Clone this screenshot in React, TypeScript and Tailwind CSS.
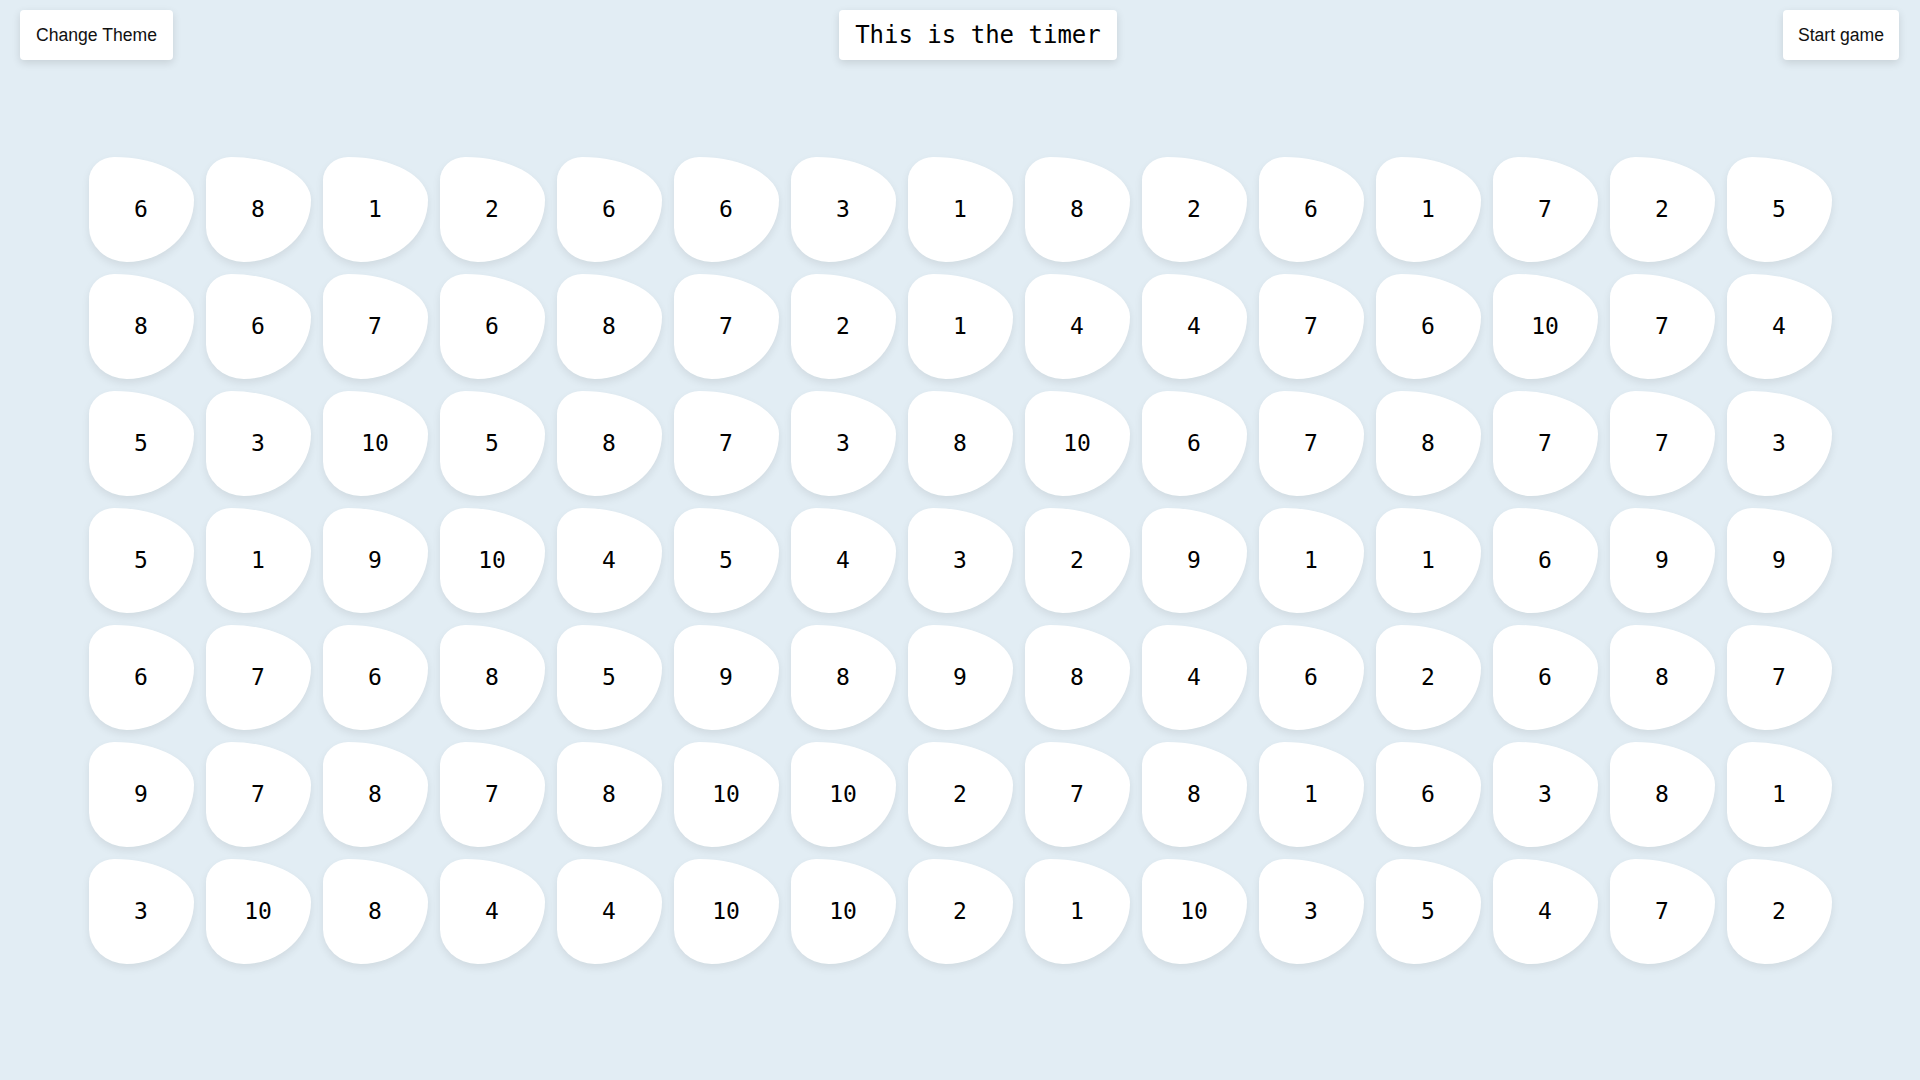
import React from "react";

const rows: number[][] = [
  [6, 8, 1, 2, 6, 6, 3, 1, 8, 2, 6, 1, 7, 2, 5],
  [8, 6, 7, 6, 8, 7, 2, 1, 4, 4, 7, 6, 10, 7, 4],
  [5, 3, 10, 5, 8, 7, 3, 8, 10, 6, 7, 8, 7, 7, 3],
  [5, 1, 9, 10, 4, 5, 4, 3, 2, 9, 1, 1, 6, 9, 9],
  [6, 7, 6, 8, 5, 9, 8, 9, 8, 4, 6, 2, 6, 8, 7],
  [9, 7, 8, 7, 8, 10, 10, 2, 7, 8, 1, 6, 3, 8, 1],
  [3, 10, 8, 4, 4, 10, 10, 2, 1, 10, 3, 5, 4, 7, 2],
];

export default function App() {
  return (
    <div className="min-h-screen w-full bg-[#e2edf4] text-black">
      <div className="flex items-start justify-between pl-5 pr-[21px] pt-[10px]">
        <button className="h-[50px] rounded-[4px] bg-white px-4 text-[17.6px] text-[#111] shadow-[0_3px_8px_rgba(0,0,0,0.12)] [font-family:'Liberation_Sans',Arial,sans-serif]">
          Change Theme
        </button>
        <div className="flex h-[50px] items-center rounded-[4px] bg-white px-4 text-[24px] shadow-[0_3px_8px_rgba(0,0,0,0.12)] [font-family:'DejaVu_Sans_Mono',monospace]">
          This is the timer
        </div>
        <button className="h-[50px] rounded-[4px] bg-white px-[15px] text-[17.6px] text-[#111] shadow-[0_3px_8px_rgba(0,0,0,0.12)] [font-family:'Liberation_Sans',Arial,sans-serif]">
          Start game
        </button>
      </div>
      <div className="mt-[97px] flex justify-center">
        <div className="grid grid-cols-[repeat(15,105px)] gap-3">
          {rows.flat().map((n, i) => (
            <div
              key={i}
              className="flex h-[105px] w-[105px] items-center justify-center bg-white text-[23px] shadow-[0_4px_8px_rgba(0,0,0,0.08)] [border-radius:24%_76%_64%_36%/22%_41%_59%_33%] [font-family:'DejaVu_Sans_Mono',monospace]"
            >
              {n}
            </div>
          ))}
        </div>
      </div>
    </div>
  );
}
